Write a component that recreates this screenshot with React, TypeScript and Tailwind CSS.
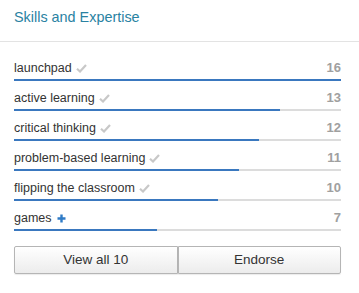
import React from 'react';

interface Skill {
  name: string;
  count: number;
  endorsed: boolean;
}

const skills: Skill[] = [
  { name: 'launchpad', count: 16, endorsed: true },
  { name: 'active learning', count: 13, endorsed: true },
  { name: 'critical thinking', count: 12, endorsed: true },
  { name: 'problem-based learning', count: 11, endorsed: true },
  { name: 'flipping the classroom', count: 10, endorsed: true },
  { name: 'games', count: 7, endorsed: false },
];

const maxCount = 16;

const Check = () => (
  <svg width="11" height="9" viewBox="0 0 11 9" className="ml-[4px] inline-block">
    <path d="M1 4.8 L4 7.5 L10 1" fill="none" stroke="#c8c8c8" strokeWidth="2.2" />
  </svg>
);

const PlusIcon = () => (
  <svg width="9" height="9" viewBox="0 0 9 9" className="ml-[5px] inline-block">
    <path d="M4.5 0.5 V8.5 M0.5 4.5 H8.5" stroke="#2f7bc6" strokeWidth="2.4" />
  </svg>
);

export default function App() {
  return (
    <div className="w-[359px] h-[293px] bg-white font-['Liberation_Sans',Arial,sans-serif] text-[#333]">
      <div className="h-[42px] pl-[14px] pt-[8px] border-b border-[#e3e3e3]">
        <h2 className="text-[14.4px] leading-[18px] text-[#2a82a2]">Skills and Expertise</h2>
      </div>
      <div className="pl-[14px] pr-[18px] pt-[17px]">
        {skills.map((s, i) => (
          <div key={s.name} className={i === 0 ? '' : 'mt-[8px]'}>
            <div className="flex items-center justify-between h-[18px] mb-[2px]">
              <span className="flex items-center text-[12.5px] leading-[18px]">
                {s.name}
                {s.endorsed ? <Check /> : <PlusIcon />}
              </span>
              <span className="text-[13px] font-bold text-[#a0a0a0]">{s.count}</span>
            </div>
            <div className="h-[2px] bg-[#dcdcdc]">
              <div className="h-full bg-[#3a78bf]" style={{ width: `${(s.count / maxCount) * 100}%` }} />
            </div>
          </div>
        ))}
        <div className="flex mt-[15px]">
          <button className="flex-1 h-[28px] text-[13.5px] text-[#333] border border-[#b5b5b5] rounded-l-[2px] bg-gradient-to-b from-white to-[#ececec] shadow-[0_1px_1px_rgba(0,0,0,0.08)]">
            View all 10
          </button>
          <button className="flex-1 h-[28px] text-[13.5px] text-[#333] border border-[#b5b5b5] rounded-r-[2px] bg-gradient-to-b from-white to-[#ececec] shadow-[0_1px_1px_rgba(0,0,0,0.08)]">
            Endorse
          </button>
        </div>
      </div>
    </div>
  );
}
